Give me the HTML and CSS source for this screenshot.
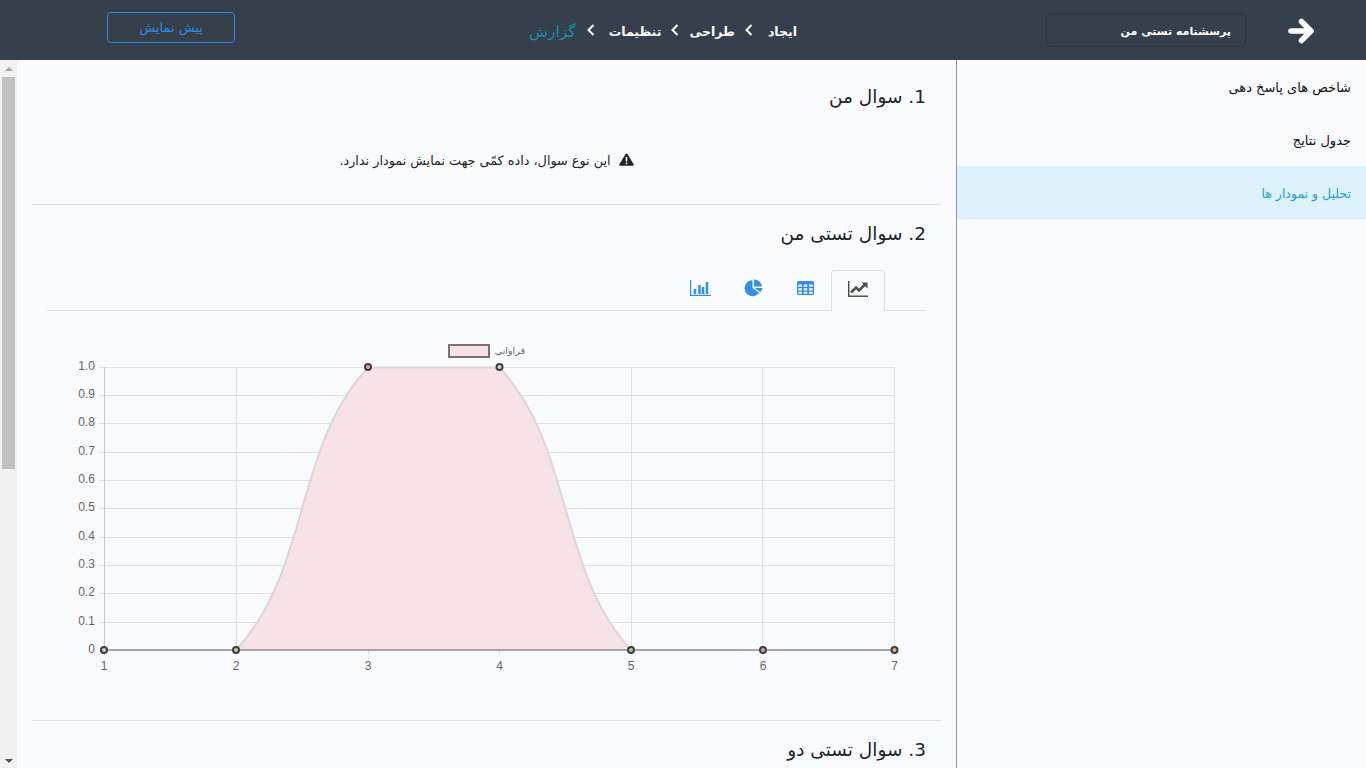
FILE: index.html
```html
<!DOCTYPE html>
<html lang="fa" dir="rtl">
<head>
<meta charset="utf-8">
<title>گزارش</title>
<link rel="stylesheet" href="styles.css">
</head>
<body>
<header class="topbar">
  <a class="back" aria-label="back"><svg width="28" height="26" viewBox="0 0 28 26"><path class="back-arrow" d="M3 13H23M13.500 3.500L23 13L13.500 22.500"/></svg></a>
  <div class="survey-name">پرسشنامه تستی من</div>
  <nav class="steps">
    <span class="step s1">ایجاد</span><svg class="chev" width="8" height="12" viewBox="0 0 8 12"><path d="M6.500 1L1.500 6L6.500 11"/></svg>
    <span class="step">طراحی</span><svg class="chev" width="8" height="12" viewBox="0 0 8 12"><path d="M6.500 1L1.500 6L6.500 11"/></svg>
    <span class="step s3">تنظیمات</span><svg class="chev" width="8" height="12" viewBox="0 0 8 12"><path d="M6.500 1L1.500 6L6.500 11"/></svg>
    <span class="step current">گزارش</span>
  </nav>
  <a class="preview">پیش نمایش</a>
</header>
<div class="layout">
  <aside class="side">
    <a class="side-item">شاخص های پاسخ دهی</a>
    <a class="side-item">جدول نتایج</a>
    <a class="side-item active">تحلیل و نمودار ها</a>
  </aside>
  <main class="content">
    <section class="question q1">
      <h2 class="q-title"><span dir="ltr">.1</span> سوال من</h2>
      <p class="notice"><svg class="warn" width="15" height="13" viewBox="0 0 15 13"><path d="M7.500 0.500c.5 0 .9.300 1.100.700l6 10c.4.700 0 1.600-.9 1.600H1.300c-.9 0-1.300-.900-.9-1.600l6-10c.2-.400.600-.700 1.100-.700z"/><rect class="warn-mark" x="6.700" y="4" width="1.600" height="4.500"/><rect class="warn-mark" x="6.700" y="9.500" width="1.600" height="1.700"/></svg>این نوع سوال، داده کمّی جهت نمایش نمودار ندارد.</p>
    </section>
    <section class="question q2">
      <h2 class="q-title"><span dir="ltr">.2</span> سوال تستی من</h2>
      <div class="tabs">
        <a class="tab on"><svg width="20" height="16" viewBox="0 0 20 16"><path class="ic-axis" d="M.7 0V15.200H20"/><path class="ic-line" d="M3 11.500L8 6.500L11 9.500L17.500 3"/><path class="ic-head" d="M13.500 1.500H19.500V7.500Z"/></svg></a>
        <a class="tab tab-table"><svg width="17" height="14" viewBox="0 0 17 14"><rect class="ic-fill" width="17" height="14" rx="1.500"/><path class="ic-grid" d="M1.300 3.500H5V5.800H1.300ZM6.700 3.500H10.300V5.800H6.700ZM12 3.500H15.700V5.800H12ZM1.300 7.200H5V9.400H1.300ZM6.700 7.200H10.300V9.400H6.700ZM12 7.200H15.700V9.400H12ZM1.300 10.800H5V12.800H1.300ZM6.700 10.800H10.300V12.800H6.700ZM12 10.800H15.700V12.800H12Z"/></svg></a>
        <a class="tab tab-pie"><svg width="19" height="18" viewBox="0 0 19 18"><path class="ic-fill" d="M8.500 1.200A8 8 0 1 0 15.200 13.700L8.500 9Z"/><path class="ic-fill" d="M10 .5A8 8 0 0 1 18 7.500H10Z"/><path class="ic-fill" d="M10.500 9H18.500A8 8 0 0 1 16.300 13Z"/></svg></a>
        <a class="tab tab-bars"><svg width="21" height="16" viewBox="0 0 21 16"><path class="ic-axis-b" d="M.6 0V15.300H21"/><path class="ic-bars" d="M5 14V9M9.500 14V5M13 14V7M17 14V2"/></svg></a>
      </div>
      <div class="chart">
        <svg class="plot" width="894" height="370" viewBox="0 0 894 370">
          <g class="legend">
            <rect class="legend-box" x="402" y="5" width="40" height="12"/>
            <text class="lbl" x="478" y="14" text-anchor="end">فراوانی</text>
          </g>
          <g class="grid">
            <path d="M52 27.500H847.500M52 55.500H847.500M52 83.500H847.500M52 112.500H847.500M52 140.500H847.500M52 168.500H847.500M52 197.500H847.500M52 225.500H847.500M52 253.500H847.500M52 282.500H847.500M52 310.500H847.500"/>
            <path d="M189.500 27V315M321.500 27V315M452.500 27V315M584.500 27V315M715.500 27V315M847.500 27V315"/>
          </g>
          <path class="y-axis" d="M57.500 27V315"/>
          <g class="lbl">
            <text x="48" y="30" text-anchor="end">1.0</text>
            <text x="48" y="58" text-anchor="end">0.9</text>
            <text x="48" y="86" text-anchor="end">0.8</text>
            <text x="48" y="115" text-anchor="end">0.7</text>
            <text x="48" y="143" text-anchor="end">0.6</text>
            <text x="48" y="171" text-anchor="end">0.5</text>
            <text x="48" y="200" text-anchor="end">0.4</text>
            <text x="48" y="228" text-anchor="end">0.3</text>
            <text x="48" y="256" text-anchor="end">0.2</text>
            <text x="48" y="285" text-anchor="end">0.1</text>
            <text x="48" y="313" text-anchor="end">0</text>
            <text x="57" y="330" text-anchor="middle">1</text>
            <text x="189" y="330" text-anchor="middle">2</text>
            <text x="321" y="330" text-anchor="middle">3</text>
            <text x="452.500" y="330" text-anchor="middle">4</text>
            <text x="584" y="330" text-anchor="middle">5</text>
            <text x="716" y="330" text-anchor="middle">6</text>
            <text x="847.500" y="330" text-anchor="middle">7</text>
          </g>
          <path class="area" d="M189 310C263 230.500 247 107 321 27.500C352.500 27.500 421.500 27.500 452.500 27.500C526.500 107 510.500 230.500 584 310Z"/>
          <path class="curve" d="M189 310C263 230.500 247 107 321 27.500C352.500 27.500 421.500 27.500 452.500 27.500C526.500 107 510.500 230.500 584 310"/>
          <path class="baseline" d="M57 310H847.500"/>
          <circle class="pt p1" cx="57" cy="310" r="3"/>
          <circle class="pt p2" cx="189" cy="310" r="3"/>
          <circle class="pt p3" cx="321" cy="27" r="3"/>
          <circle class="pt p4" cx="452.500" cy="27" r="3"/>
          <circle class="pt p5" cx="584" cy="310" r="3"/>
          <circle class="pt p6" cx="716" cy="310" r="3"/>
          <circle class="pt p7" cx="847.500" cy="310" r="3"/>
        </svg>
      </div>
    </section>
    <section class="question q3">
      <h2 class="q-title"><span dir="ltr">.3</span> سوال تستی دو</h2>
    </section>
  </main>
  <div class="scrollbar">
    <span class="scroll-up"></span>
    <span class="scroll-thumb"></span>
    <span class="scroll-down"></span>
  </div>
</div>
</body>
</html>
```
FILE: styles.css
```css
* { box-sizing: border-box; }
html, body { margin: 0; height: 100%; overflow: hidden; }
body { background: #f9fafc; font-family: "DejaVu Sans", sans-serif; color: #212529; }
.topbar { height: 60px; background: #36404c; display: flex; align-items: center; }
.back { width: 120px; padding-right: 9px; display: flex; justify-content: center; padding-top: 2px; }
.back-arrow { fill: none; stroke: #fff; stroke-width: 5.500; stroke-linecap: round; stroke-linejoin: round; }
.survey-name { width: 200px; height: 34px; border: 1px solid #2d3540; border-radius: 5px; color: #fff; font-size: 11px; font-weight: 700; line-height: 36px; padding-right: 14px; }
.steps { display: flex; align-items: center; gap: 10px; width: 270px; margin-right: 249px; padding-top: 3px; font-size: 12.500px; font-weight: 700; color: #fff; }
.s1 { margin-left: 5px; }
.s3 { margin-left: 4px; }
.chev { flex-shrink: 0; fill: none; margin-top: -3px; }
.chev path { stroke: #fff; stroke-width: 2; fill: none; }
.current { margin-right: 1px; color: #1a8fa5; font-weight: 400; font-size: 15.500px; }
.preview { width: 128px; height: 31px; margin: 12px 292px 0 0; align-self: flex-start; border: 1px solid #2d8be0; border-radius: 4px; color: #2d8be0; font-size: 13px; text-align: center; line-height: 30px; }
.layout { display: flex; height: 708px; }
.side { width: 410px; border-left: 1px solid #8f969c; }
.side-item { display: block; height: 53px; padding-right: 15px; font-size: 13px; line-height: 55px; color: #111; }
.active { background: #dcf1fa; color: #23a3c8; font-size: 12.500px; }
.content { width: 939px; padding: 0 15px; overflow: hidden; }
.question { border-bottom: 1px solid #dfe2e6; padding: 0 15px; }
.q1 { height: 145px; }
.q2 { height: 516px; }
.q-title { margin: 0; font-size: 18.500px; font-weight: 400; color: #212529; padding-top: 15px; line-height: 28px; }
.q1 .q-title { padding-top: 23px; }
.q3 { border: 0; }
.notice { margin: 41px 0 0; text-align: center; font-size: 12.800px; line-height: 17px; }
.warn { margin-left: 8px; fill: #212529; vertical-align: -1px; }
.warn-mark { fill: #f9fafc; }
.tabs { display: flex; height: 41px; margin-top: 22px; border-bottom: 1px solid #dee2e6; padding-right: 41px; }
.tab { width: 52.500px; height: 41px; display: flex; align-items: center; justify-content: center; padding-bottom: 5px; }
.on { width: 54px; border: 1px solid #dee2e6; border-bottom: 0; border-radius: 4px 4px 0 0; background: #f9fafc; }
.tab-table { padding-left: 1px; }
.tab-pie { padding-left: 2px; }
.tab-bars { padding-left: 2px; }
.ic-axis { fill: none; stroke: #495057; stroke-width: 1.500; }
.ic-line { fill: none; stroke: #495057; stroke-width: 2.500; }
.ic-head { fill: #495057; }
.ic-fill { fill: #3390e2; }
.ic-grid { fill: #eef5fc; }
.ic-axis-b { fill: none; stroke: #3390e2; stroke-width: 1.300; }
.ic-bars { fill: none; stroke: #3390e2; stroke-width: 2.500; }
.chart { margin: 29px -15px 0 0; }
.plot { display: block; direction: ltr; }
.lbl, .lbl text { font-family: "Liberation Sans", "DejaVu Sans", sans-serif; font-size: 12px; fill: #666; }
.legend .lbl { font-family: "DejaVu Sans", sans-serif; font-size: 9.500px; }
.legend-box { fill: #f7e3e7; stroke: #7d6f72; stroke-width: 2; }
.grid path { fill: none; stroke: #e0e1e4; stroke-width: 1; }
.y-axis { stroke: #c4c6c9; stroke-width: 1; }
.area { fill: #f6e1e5; fill-opacity: 0.92; }
.curve { fill: none; stroke: #dcd6d9; stroke-width: 2; }
.baseline { stroke: #8d8e90; stroke-width: 1.500; }
.pt { stroke: #3b3f45; stroke-width: 2; }
.p1 { fill: #e3c3d0; }
.p2 { fill: #d8c98a; }
.p3 { fill: #f09fb0; }
.p4 { fill: #bfe3c8; }
.p5 { fill: #8fe07a; }
.p6 { fill: #e59aa6; }
.p7 { fill: #e8b27a; }
.scrollbar { width: 17px; background: #f1f1f1; display: flex; flex-direction: column; align-items: center; }
.scroll-up { width: 0; height: 0; margin: 7px 0 6px; border: 4px solid transparent; border-top: 0; border-bottom: 4px solid #a3a3a3; }
.scroll-thumb { width: 13px; height: 392px; background: #c1c1c1; }
.scroll-down { width: 0; height: 0; margin-top: auto; margin-bottom: 5px; border: 4px solid transparent; border-bottom: 0; border-top: 4px solid #505050; }
```
